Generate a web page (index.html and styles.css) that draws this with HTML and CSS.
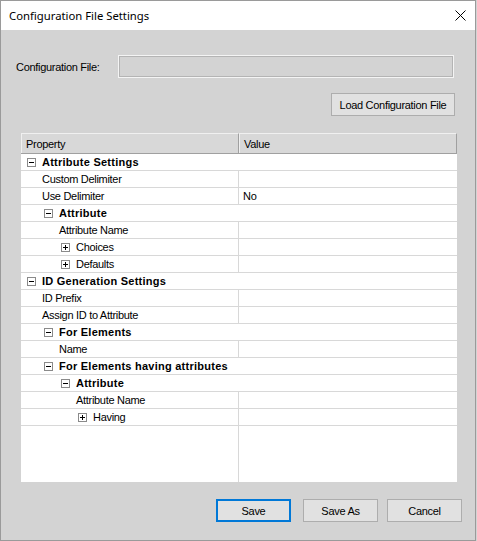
FILE: index.html
```html
<!DOCTYPE html>
<html>
<head>
<meta charset="utf-8">
<link rel="stylesheet" href="styles.css">
</head>
<body>
<div class="window">
  <div class="titlebar">
    <span class="title">Configuration File Settings</span>
    <svg class="close" width="11" height="11" viewBox="0 0 11 11"><path d="M0.5 0.5 L10.5 10.5 M10.5 0.5 L0.5 10.5" stroke="#000" stroke-width="1" fill="none"/></svg>
  </div>
  <div class="content">
    <div class="file-row">
      <span class="label">Configuration File:</span>
      <div class="textbox"></div>
    </div>
    <div class="load-row">
      <button class="btn load">Load Configuration File</button>
    </div>
    <div class="grid">
      <div class="header">
        <div class="hcell name">Property</div>
        <div class="hcell value">Value</div>
      </div>
      <div class="row cat"><div class="name l0"><span class="box minus"></span><span class="txt">Attribute Settings</span></div></div>
      <div class="row"><div class="name p1">Custom Delimiter</div><div class="value"></div></div>
      <div class="row"><div class="name p1">Use Delimiter</div><div class="value">No</div></div>
      <div class="row cat"><div class="name l1"><span class="box minus"></span><span class="txt">Attribute</span></div></div>
      <div class="row"><div class="name p2">Attribute Name</div><div class="value"></div></div>
      <div class="row"><div class="name l2 exp"><span class="box plus"></span><span>Choices</span></div><div class="value"></div></div>
      <div class="row"><div class="name l2 exp"><span class="box plus"></span><span>Defaults</span></div><div class="value"></div></div>
      <div class="row cat"><div class="name l0"><span class="box minus"></span><span class="txt">ID Generation Settings</span></div></div>
      <div class="row"><div class="name p1">ID Prefix</div><div class="value"></div></div>
      <div class="row"><div class="name p1">Assign ID to Attribute</div><div class="value"></div></div>
      <div class="row cat"><div class="name l1"><span class="box minus"></span><span class="txt">For Elements</span></div></div>
      <div class="row"><div class="name p2">Name</div><div class="value"></div></div>
      <div class="row cat"><div class="name l1"><span class="box minus"></span><span class="txt">For Elements having attributes</span></div></div>
      <div class="row cat"><div class="name l2"><span class="box minus"></span><span class="txt">Attribute</span></div></div>
      <div class="row"><div class="name p3">Attribute Name</div><div class="value"></div></div>
      <div class="row"><div class="name l3 exp"><span class="box plus"></span><span>Having</span></div><div class="value"></div></div>
      <div class="filler"><div class="name"></div><div class="value"></div></div>
    </div>
    <div class="button-row">
      <button class="btn default">Save</button>
      <button class="btn saveas">Save As</button>
      <button class="btn cancel">Cancel</button>
    </div>
  </div>
</div>
</body>
</html>
```

FILE: styles.css
```css
html, body {
  margin: 0;
  padding: 0;
  background: #d3d3d3;
}
body {
  width: 477px;
  height: 541px;
  overflow: hidden;
  font-family: "Liberation Sans", Arial, sans-serif;
  font-size: 11px;
  letter-spacing: -0.3px;
  color: #000;
}
.window {
  width: 474px;
  height: 539px;
  border: 1px solid #9a9a9a;
  background: #d3d3d3;
  display: flex;
  flex-direction: column;
}
.titlebar {
  height: 29px;
  background: #fff;
  display: flex;
  align-items: center;
  justify-content: space-between;
  padding: 0 9px 0 8px;
  flex: none;
}
.title {
  font-family: "Noto Sans", "Liberation Sans", sans-serif;
  font-size: 11.3px;
  letter-spacing: 0;
  margin-top: -1px;
  color: #000;
}
.close {
  display: block;
}
.content {
  display: flex;
  flex-direction: column;
}
.file-row {
  margin-top: 25px;
  display: flex;
  align-items: center;
  padding-left: 15px;
  height: 23px;
}
.label {
  width: 102px;
  flex: none;
}
.textbox {
  width: 334px;
  height: 21px;
  border: 1px solid #f4f4f4;
  box-shadow: inset 0 0 0 1px #b4b4b4;
  background: #d3d3d3;
}
.load-row {
  margin-top: 15px;
  display: flex;
  justify-content: flex-end;
  padding-right: 20px;
}
.btn {
  font-family: "Liberation Sans", Arial, sans-serif;
  font-size: 11px;
  letter-spacing: -0.3px;
  color: #000;
  background: #e1e1e1;
  border: 1px solid #adadad;
  height: 23px;
  padding: 0;
  margin: 0;
}
.load {
  width: 124px;
}
.grid {
  margin-top: 17px;
  margin-left: 20px;
  width: 436px;
  background: #fff;
  display: flex;
  flex-direction: column;
}
.header {
  display: flex;
  height: 20px;
  border-bottom: 1px solid #a0a0a0;
  background: #d8d8d8;
}
.hcell {
  display: flex;
  align-items: center;
  box-sizing: border-box;
  width: 218px;
  border-right: 1px solid #a0a0a0;
  border-top: 1px solid #f0f0f0;
  border-left: 1px solid #f0f0f0;
  padding-left: 4px;
}
.row {
  display: flex;
  height: 16px;
  border-bottom: 1px solid #d8d8d8;
}
.row .name {
  box-sizing: border-box;
  width: 218px;
  border-right: 1px solid #d8d8d8;
  display: flex;
  align-items: center;
  white-space: nowrap;
  flex: none;
}
.row .value {
  flex: 1;
  display: flex;
  align-items: center;
  padding-left: 4px;
}
.row.cat .name {
  width: 100%;
  border-right: none;
  font-weight: bold;
  letter-spacing: 0.25px;
}
.p1 { padding-left: 21px; }
.p2 { padding-left: 38px; }
.p3 { padding-left: 55px; }
.l0 { padding-left: 6px; }
.l1 { padding-left: 23px; }
.l2 { padding-left: 40px; }
.l3 { padding-left: 57px; }
.box {
  width: 9px;
  height: 9px;
  box-sizing: border-box;
  border: 1px solid #8a8a8a;
  background: #fff;
  position: relative;
  margin-right: 6px;
  flex: none;
}
.box::before {
  content: "";
  position: absolute;
  left: 1px;
  top: 3px;
  width: 5px;
  height: 1px;
  background: #000;
}
.box.plus::after {
  content: "";
  position: absolute;
  left: 3px;
  top: 1px;
  width: 1px;
  height: 5px;
  background: #000;
}
.filler {
  display: flex;
  height: 56px;
}
.filler .name {
  box-sizing: border-box;
  width: 218px;
  border-right: 1px solid #d8d8d8;
}
.button-row {
  margin-top: 17px;
  display: flex;
  justify-content: flex-end;
  padding-right: 13px;
}
.button-row .btn {
  width: 75px;
}
.btn.default {
  border: 2px solid #0078d7;
  margin-right: 12px;
}
.btn.saveas {
  margin-right: 9px;
}
```
